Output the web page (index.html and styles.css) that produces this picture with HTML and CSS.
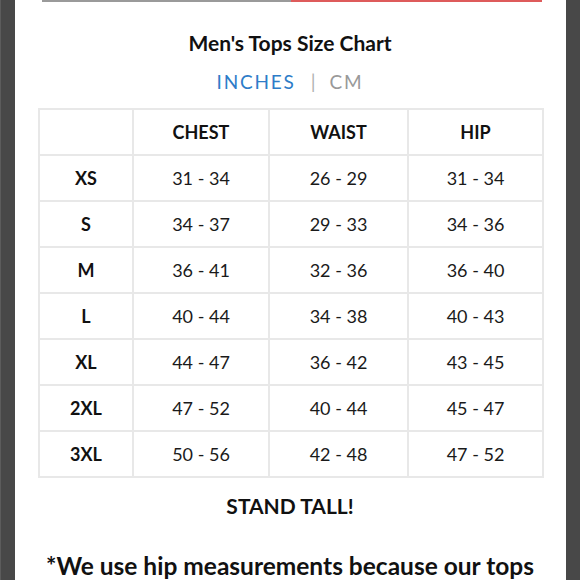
FILE: index.html
```html
<!DOCTYPE html>
<html>
<head>
<meta charset="utf-8">
<link rel="stylesheet" href="styles.css">
</head>
<body>
<div class="panel">
  <div class="content">
    <div class="tabs"><span class="tab tab-grey"></span><span class="tab tab-red"></span></div>
    <h1 class="title">Men's Tops Size Chart</h1>
    <div class="units"><span class="unit-active">INCHES</span><span class="sep">|</span><span class="unit">CM</span></div>
    <table class="chart">
      <colgroup><col class="c0"><col class="c1"><col class="c2"><col class="c3"></colgroup>
      <tr><th></th><th>CHEST</th><th>WAIST</th><th>HIP</th></tr>
      <tr><th>XS</th><td>31 - 34</td><td>26 - 29</td><td>31 - 34</td></tr>
      <tr><th>S</th><td>34 - 37</td><td>29 - 33</td><td>34 - 36</td></tr>
      <tr><th>M</th><td>36 - 41</td><td>32 - 36</td><td>36 - 40</td></tr>
      <tr><th>L</th><td>40 - 44</td><td>34 - 38</td><td>40 - 43</td></tr>
      <tr><th>XL</th><td>44 - 47</td><td>36 - 42</td><td>43 - 45</td></tr>
      <tr><th>2XL</th><td>47 - 52</td><td>40 - 44</td><td>45 - 47</td></tr>
      <tr><th>3XL</th><td>50 - 56</td><td>42 - 48</td><td>47 - 52</td></tr>
    </table>
    <p class="motto">STAND TALL!</p>
    <p class="note">*We use hip measurements because our tops</p>
  </div>
</div>
</body>
</html>
```

FILE: styles.css
```css
html, body {
  margin: 0;
  padding: 0;
}
body {
  background: #484848;
  border-left: 1px solid #5c5c5c;
  height: 580px;
  overflow: hidden;
  font-family: Lato, "Liberation Sans", sans-serif;
  color: #111;
}
.panel {
  margin-left: 14px;
  width: 551px;
  height: 580px;
  background: #fff;
  overflow: hidden;
}
.content {
  margin-left: 23px;
  width: 504px;
}
.tabs {
  display: flex;
  margin-left: 4px;
  height: 2px;
}
.tab-grey { width: 249px; background: #9a9a9a; }
.tab-red { flex: 1; background: #de5b5b; }
.title {
  margin: 29px 0 0;
  font-size: 21px;
  line-height: 24px;
  font-weight: 700;
  text-align: center;
}
.units {
  margin-top: 15px;
  text-align: center;
  font-size: 19px;
  line-height: 24px;
  letter-spacing: 1.8px;
}
.unit-active { color: #2d7cc8; }
.sep { color: #b0b0b0; margin: 0 14px 0 15px; letter-spacing: 0; }
.unit { color: #999; }
.chart {
  margin-top: 14px;
  width: 504px;
  border-collapse: collapse;
  table-layout: fixed;
  font-size: 18px;
}
.c0 { width: 94px; }
.c1 { width: 136px; }
.c2 { width: 139px; }
.c3 { width: 135px; }
.chart th, .chart td {
  border: 2px solid #e8e8e8;
  height: 44px;
  padding: 0;
  text-align: center;
  vertical-align: middle;
}
.chart th { font-weight: 700; }
.chart td { font-weight: 400; color: #1a1a1a; }
.motto {
  margin: 16px 0 0;
  text-align: center;
  font-weight: 700;
  font-size: 21px;
  line-height: 24px;
}
.note {
  margin: 33px 0 0;
  white-space: nowrap;
  text-align: center;
  font-weight: 700;
  font-size: 24.5px;
  line-height: 30px;
}
```
